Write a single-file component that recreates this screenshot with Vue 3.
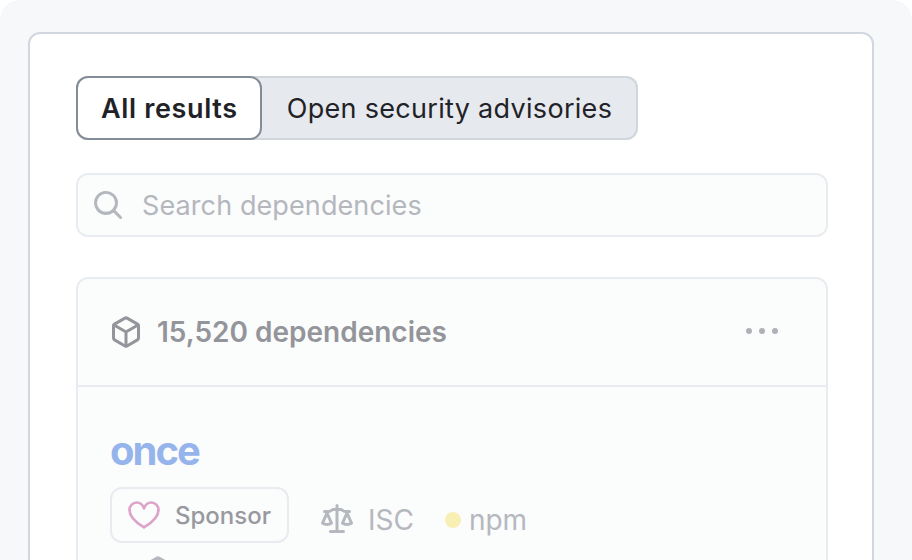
<script setup>
const tabs = [
  { label: 'All results', active: true },
  { label: 'Open security advisories', active: false }
]
</script>

<template>
  <div class="frame">
    <div class="card">
      <div class="tabs">
        <button v-for="tab in tabs" :key="tab.label" class="tab" :class="{ active: tab.active }">
          {{ tab.label }}
        </button>
      </div>

      <div class="search">
        <svg class="search-icon" width="32" height="32" viewBox="0 0 16 16" fill="currentColor">
          <path d="M10.68 11.74a6 6 0 0 1-7.922-8.982 6 6 0 0 1 8.982 7.922l3.04 3.04a.749.749 0 0 1-.326 1.275.749.749 0 0 1-.734-.215ZM11.5 7a4.499 4.499 0 1 0-8.997 0A4.499 4.499 0 0 0 11.5 7Z"/>
        </svg>
        <span>Search dependencies</span>
      </div>

      <div class="box">
        <div class="box-header">
          <div class="count">
            <svg width="32" height="32" viewBox="0 0 16 16" fill="currentColor">
              <path d="m8.878.392 5.25 3.045c.54.314.872.89.872 1.514v6.098a1.75 1.75 0 0 1-.872 1.514l-5.25 3.045a1.75 1.75 0 0 1-1.756 0l-5.25-3.045A1.75 1.75 0 0 1 1 11.049V4.951c0-.624.332-1.201.872-1.514L7.122.392a1.75 1.75 0 0 1 1.756 0ZM7.875 1.69l-4.63 2.685L8 7.133l4.755-2.758-4.63-2.685a.248.248 0 0 0-.25 0ZM2.5 5.677v5.372c0 .09.047.171.125.216l4.625 2.683V8.432Zm6.25 8.271 4.625-2.683a.25.25 0 0 0 .125-.216V5.677L8.75 8.432Z"/>
            </svg>
            <span>15,520 dependencies</span>
          </div>
          <div class="dots"><i></i><i></i><i></i></div>
        </div>

        <div class="row">
          <div class="name">once</div>
          <div class="meta">
            <div class="sponsor">
              <svg width="32" height="32" viewBox="0 0 16 16" fill="none" stroke="currentColor" stroke-width="1.35" stroke-linejoin="round">
                <path d="M8 14.2C6 13 .75 9.6 .75 5.5.75 3.3 2.5 1.75 4.25 1.75 5.9 1.75 7.4 2.9 8 4.7 8.6 2.9 10.1 1.75 11.75 1.75 13.5 1.75 15.25 3.3 15.25 5.5 15.25 9.6 10 13 8 14.2Z"/>
              </svg>
              <span>Sponsor</span>
            </div>
            <div class="license">
              <svg width="32" height="32" viewBox="0 0 16 16" fill="currentColor">
                <path d="M8.75.75V2h.985c.304 0 .603.08.867.231l1.29.736c.038.022.08.033.124.033h2.234a.75.75 0 0 1 0 1.5h-.427l2.111 4.692a.75.75 0 0 1-.154.838l-.53-.53.529.531-.001.002-.002.002-.006.006-.006.005-.01.01-.045.04c-.21.176-.441.327-.686.45C14.556 10.78 13.88 11 13 11a4.498 4.498 0 0 1-2.023-.454 3.544 3.544 0 0 1-.686-.45l-.045-.04-.016-.015-.006-.006-.004-.004v-.001a.75.75 0 0 1-.154-.838L12.178 4.5h-.162c-.305 0-.604-.079-.868-.231l-1.29-.736a.245.245 0 0 0-.124-.033H8.75V13h2.5a.75.75 0 0 1 0 1.5h-6.5a.75.75 0 0 1 0-1.5h2.5V3.5h-.984a.245.245 0 0 0-.124.033l-1.289.737c-.265.15-.564.23-.869.23h-.162l2.112 4.692a.75.75 0 0 1-.154.838l-.53-.53.529.531-.001.002-.002.002-.006.006-.016.015-.045.04c-.21.176-.441.327-.686.45C4.556 10.78 3.88 11 3 11a4.498 4.498 0 0 1-2.023-.454 3.544 3.544 0 0 1-.686-.45l-.045-.04-.016-.015-.006-.006-.004-.004v-.001a.75.75 0 0 1-.154-.838L2.178 4.5H1.75a.75.75 0 0 1 0-1.5h2.234a.249.249 0 0 0 .125-.033l1.288-.737c.265-.15.564-.23.869-.23h.984V.75a.75.75 0 0 1 1.5 0Zm2.945 8.477c.285.135.718.273 1.305.273s1.02-.138 1.305-.273L13 6.327Zm-10 0c.285.135.718.273 1.305.273s1.02-.138 1.305-.273L3 6.327Z"/>
              </svg>
              <span>ISC</span>
            </div>
            <div class="eco">
              <i class="eco-dot"></i>
              <span>npm</span>
            </div>
          </div>
          <div class="dependents">
            <svg width="32" height="32" viewBox="0 0 16 16" fill="currentColor">
              <path d="m8.878.392 5.25 3.045c.54.314.872.89.872 1.514v6.098a1.75 1.75 0 0 1-.872 1.514l-5.25 3.045a1.75 1.75 0 0 1-1.756 0l-5.25-3.045A1.75 1.75 0 0 1 1 11.049V4.951c0-.624.332-1.201.872-1.514L7.122.392a1.75 1.75 0 0 1 1.756 0Z"/>
            </svg>
          </div>
        </div>
      </div>
    </div>
  </div>
</template>

<style scoped>
.frame {
  width: 912px;
  height: 560px;
  box-sizing: border-box;
  padding: 32px 38px 0 28px;
  background: #f6f8fa;
  border-radius: 20px 20px 0 0;
  overflow: hidden;
  font-family: Inter, "Liberation Sans", sans-serif;
}

.card {
  height: 600px;
  box-sizing: border-box;
  padding: 42px 44px 0 46px;
  background: #ffffff;
  border: 2px solid #d0d7de;
  border-radius: 12px;
}

.tabs {
  display: inline-flex;
  height: 64px;
  background: #e6e9ee;
  border-radius: 12px;
  box-shadow: inset 0 0 0 2px #d0d7de;
}

.tab {
  padding: 0 26px 0 25px;
  border: none;
  background: transparent;
  font-family: inherit;
  font-size: 27px;
  letter-spacing: 0.3px;
  color: #1f2328;
  border-radius: 12px;
}

.tab.active {
  background: #ffffff;
  border: 2px solid #848d97;
  padding: 0 22px 0 23px;
  font-weight: 600;
  letter-spacing: 0.65px;
}

.search {
  display: flex;
  align-items: center;
  gap: 18px;
  height: 64px;
  box-sizing: border-box;
  margin-top: 33px;
  padding: 0 14px;
  background: #fbfcfc;
  border: 2px solid #e8ebef;
  border-radius: 12px;
  font-size: 27px;
  letter-spacing: 0.1px;
  color: #b4b7bd;
}

.search-icon {
  flex: none;
}

.box {
  margin-top: 40px;
  background: #fbfcfc;
  border: 2px solid #e8ebef;
  border-radius: 12px;
}

.box-header {
  display: flex;
  align-items: center;
  justify-content: space-between;
  height: 106px;
  padding: 0 48px 0 32px;
  border-bottom: 2px solid #e8ebef;
}

.count {
  display: flex;
  align-items: center;
  gap: 15px;
  font-size: 28px;
  font-weight: 600;
  color: #93959a;
}

.dots {
  display: flex;
  gap: 7px;
  margin-bottom: 3px;
}

.dots i {
  width: 6px;
  height: 6px;
  border-radius: 50%;
  background: #afb1b7;
}

.row {
  padding: 42px 32px 0;
}

.name {
  font-size: 40px;
  line-height: 44px;
  font-weight: 700;
  letter-spacing: -2px;
  color: #96b4ec;
}

.meta {
  display: flex;
  align-items: center;
  margin-top: 14px;
}

.sponsor {
  display: flex;
  align-items: center;
  gap: 15px;
  height: 56px;
  box-sizing: border-box;
  padding: 0 16px;
  border: 2px solid #e8ebef;
  border-radius: 12px;
  font-size: 24px;
  font-weight: 500;
  color: #98999e;
}

.sponsor svg {
  color: #dda4c9;
}

.license,
.eco {
  display: flex;
  align-items: center;
  margin-top: 9px;
  font-size: 28px;
  color: #b5b8be;
}

.license {
  gap: 15px;
  margin-left: 32px;
}

.eco {
  gap: 8px;
  margin-left: 31px;
}

.eco-dot {
  width: 16px;
  height: 16px;
  border-radius: 50%;
  background: #f8efb5;
}

.dependents {
  margin-top: 13px;
  padding-left: 32px;
  color: #b5b8be;
}
</style>

<style>
html,
body {
  background: #ffffff;
}
</style>
